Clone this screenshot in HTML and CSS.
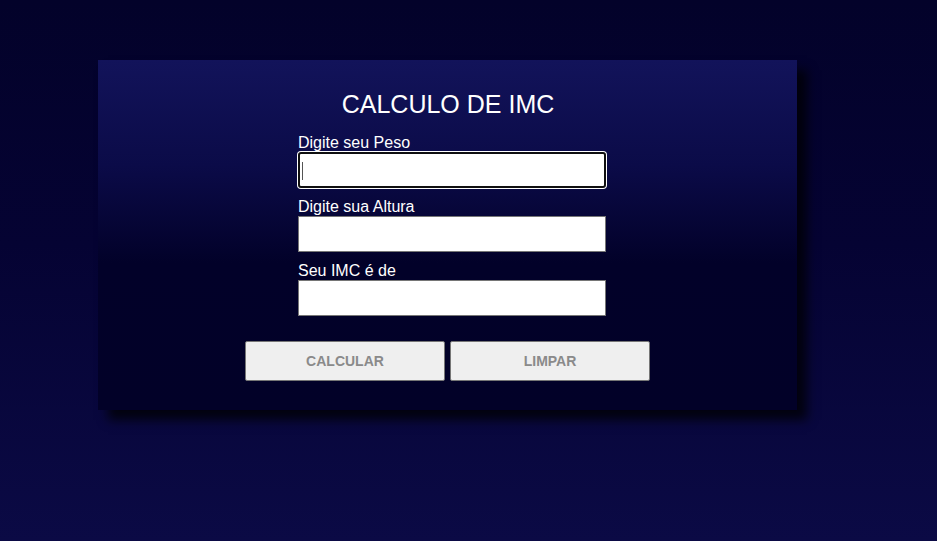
FILE: index.html
```html
<!DOCTYPE html>
<html lang="pt">
<head>
<meta charset="utf-8">
<title>Calculo de IMC</title>
<link rel="stylesheet" href="styles.css">
</head>
<body>
<main class="card">
  <h1 class="title">CALCULO DE IMC</h1>
  <form class="form">
    <label class="field">
      <span class="label">Digite seu Peso</span>
      <span class="input-wrap">
        <input class="input input--focus" type="text">
        <span class="caret"></span>
      </span>
    </label>
    <label class="field">
      <span class="label">Digite sua Altura</span>
      <input class="input" type="text">
    </label>
    <label class="field">
      <span class="label">Seu IMC é de</span>
      <input class="input" type="text">
    </label>
  </form>
  <div class="actions">
    <button class="btn" type="button">CALCULAR</button>
    <button class="btn" type="button">LIMPAR</button>
  </div>
</main>
</body>
</html>
```
FILE: styles.css
```css
html, body {
  margin: 0;
  padding: 0;
  height: 100%;
}
body {
  background: linear-gradient(to bottom, #03022a 0%, #050333 45%, #0b0a45 100%);
  font-family: "Liberation Sans", Arial, sans-serif;
  overflow: hidden;
}
.card {
  width: 699px;
  height: 350px;
  margin: 60px 0 0 98px;
  box-sizing: border-box;
  background: linear-gradient(to bottom, #12135a 0%, #0b0b48 30%, #020129 58%, #020128 100%);
  box-shadow: 10px 10px 10px rgba(0, 0, 0, 0.75);
  display: flex;
  flex-direction: column;
  align-items: center;
  padding-top: 30px;
}
.title {
  margin: 0;
  color: #fff;
  font-weight: normal;
  font-size: 25px;
  line-height: 28px;
  height: 44px;
  padding-left: 1px;
}
.form {
  display: flex;
  flex-direction: column;
  gap: 10px;
  width: 308px;
  margin-left: 9px;
}
.field {
  display: flex;
  flex-direction: column;
}
.label {
  color: #fff;
  font-size: 16px;
  line-height: 18px;
}
.input-wrap {
  position: relative;
  display: block;
}
.input {
  display: block;
  width: 308px;
  height: 36px;
  box-sizing: border-box;
  border: 1px solid #767676;
  border-radius: 0;
  background: #fff;
  padding: 0 4px;
  margin: 0;
  font: 16px "Liberation Sans", Arial, sans-serif;
  outline: none;
}
.input--focus {
  border: 2px solid #101010;
  border-radius: 3px;
  box-shadow: 0 0 0 1px #fff;
}
.caret {
  position: absolute;
  left: 4px;
  top: 10px;
  width: 1px;
  height: 18px;
  background: #555;
}
.actions {
  display: flex;
  gap: 5px;
  margin-top: 25px;
  margin-left: 0;
}
.btn {
  width: 200px;
  height: 40px;
  box-sizing: border-box;
  background: #efefef;
  border: 1px solid #767676;
  border-radius: 2px;
  color: #8a8a8a;
  font: bold 14px "Liberation Sans", Arial, sans-serif;
  padding: 0;
}
```
